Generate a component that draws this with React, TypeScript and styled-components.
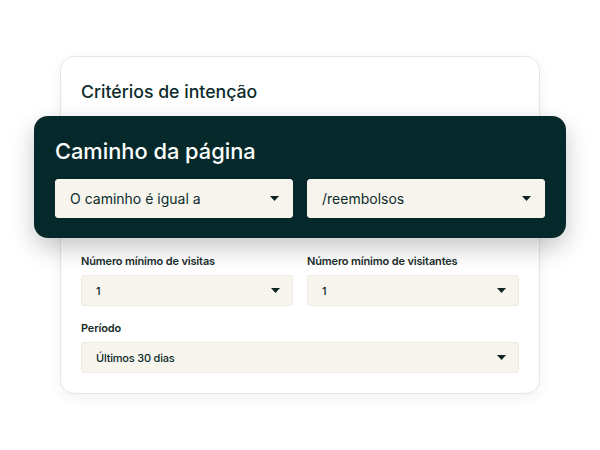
import styled, { createGlobalStyle } from "styled-components";

const GlobalStyle = createGlobalStyle`
  html, body {
    margin: 0;
    padding: 0;
    background: #ffffff;
  }
  body {
    font-family: Inter, "Noto Sans", sans-serif;
    color: #0b2a2a;
  }
`;

interface SelectProps {
  value: string;
  dark?: boolean;
}

function Select({ value, dark }: SelectProps) {
  return (
    <SelectBox $dark={dark}>
      <SelectValue $dark={dark}>{value}</SelectValue>
      <Caret width="9" height="5" viewBox="0 0 9 5">
        <path d="M0 0h9L4.5 5z" fill="#0b2424" />
      </Caret>
    </SelectBox>
  );
}

export default function App() {
  return (
    <>
      <GlobalStyle />
      <Page>
        <Card>
          <CardHeader>
            <CardTitle>Critérios de intenção</CardTitle>
          </CardHeader>
          <Highlight>
            <HighlightTitle>Caminho da página</HighlightTitle>
            <Row>
              <Select dark value="O caminho é igual a" />
              <Select dark value="/reembolsos" />
            </Row>
          </Highlight>
          <CardBody>
            <Row>
              <Field>
                <Label>Número mínimo de visitas</Label>
                <Select value="1" />
              </Field>
              <Field>
                <Label>Número mínimo de visitantes</Label>
                <Select value="1" />
              </Field>
            </Row>
            <Field>
              <Label>Período</Label>
              <Select value="Últimos 30 dias" />
            </Field>
          </CardBody>
        </Card>
      </Page>
    </>
  );
}

const Page = styled.main`
  width: 600px;
  height: 450px;
  padding: 56px 0 0 60px;
  box-sizing: border-box;
`;

const Card = styled.section`
  width: 480px;
  box-sizing: border-box;
  border: 1px solid #e6e6e4;
  border-radius: 14px;
  background: #ffffff;
  box-shadow: 0 4px 14px rgba(0, 0, 0, 0.06);
`;

const CardHeader = styled.header`
  padding: 24px 20px 0;
`;

const CardTitle = styled.h2`
  margin: 0;
  font-size: 17.7px;
  line-height: 22px;
  font-weight: 500;
  color: #0b2b2b;
`;

const Highlight = styled.div`
  margin: 13px -27px 0;
  padding: 20px 21px 20px;
  background: #05292a;
  border-radius: 14px;
  box-shadow: 0 10px 24px rgba(0, 0, 0, 0.22);
`;

const HighlightTitle = styled.h1`
  margin: 0 0 13px;
  font-size: 21.8px;
  line-height: 30px;
  font-weight: 500;
  color: #ffffff;
`;

const Row = styled.div`
  display: grid;
  grid-template-columns: 1fr 1fr;
  column-gap: 14px;
`;

const CardBody = styled.div`
  display: flex;
  flex-direction: column;
  gap: 13px;
  padding: 14px 20px 20px;
`;

const Field = styled.div`
  display: flex;
  flex-direction: column;
  gap: 5px;
`;

const Label = styled.label`
  font-size: 11px;
  line-height: 18px;
  font-weight: 600;
  letter-spacing: -0.15px;
  color: #1a2b2b;
`;

const SelectBox = styled.div<{ $dark?: boolean }>`
  display: flex;
  align-items: center;
  justify-content: space-between;
  height: ${(p) => (p.$dark ? "39px" : "31px")};
  padding: 0 ${(p) => (p.$dark ? "13px 0 14px" : "12px 0 14px")};
  box-sizing: border-box;
  background: #f8f5ee;
  border: 1px solid ${(p) => (p.$dark ? "#f8f5ee" : "#ece9e1")};
  border-radius: 3px;
`;

const SelectValue = styled.span<{ $dark?: boolean }>`
  font-size: ${(p) => (p.$dark ? "14px" : "11px")};
  font-weight: ${(p) => (p.$dark ? 400 : 500)};
  letter-spacing: ${(p) => (p.$dark ? "0" : "-0.2px")};
  color: #0b2a2a;
`;

const Caret = styled.svg`
  flex: none;
`;
